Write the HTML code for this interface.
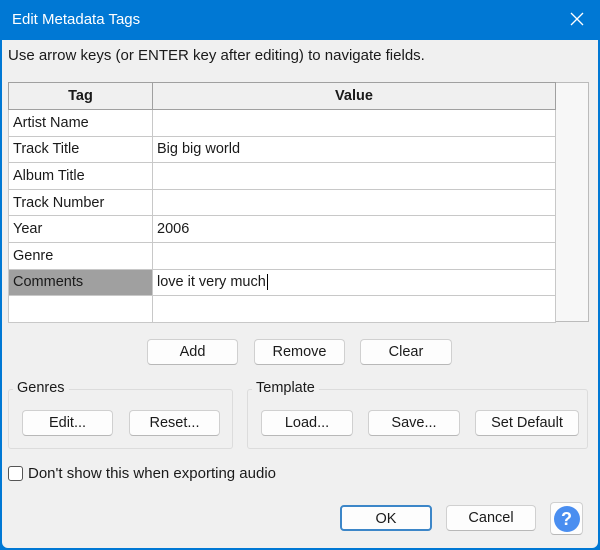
<!DOCTYPE html>
<html><head><meta charset="utf-8"><style>
*{box-sizing:border-box;margin:0;padding:0}
body{width:600px;height:550px;overflow:hidden;background:#0078d4;font-family:"Liberation Sans",sans-serif;font-size:14.5px;color:#1a1a1a;position:relative}
.win{position:absolute;left:2px;top:40px;width:596px;height:508px;background:#f0f0f0;border-radius:0 0 6px 6px}
.a{position:absolute}
.title{left:12px;top:11px;color:#fff;font-size:15px}
.btn{position:absolute;background:#fdfdfd;border:1px solid #d0d0d0;border-bottom-color:#b8b8b8;border-radius:4px;text-align:center;line-height:24px;height:26px}
.grp{position:absolute;border:1px solid #dcdcdc;border-radius:3px}
.gl{position:absolute;background:#f0f0f0;padding:0 4px}
table{border-collapse:collapse;position:absolute;left:8px;top:82px;background:#fff}
td{border:1px solid #c8c8c8;height:26.6px;padding:0 4px;white-space:nowrap}
th{border:1px solid #a0a0a0;background:#f0f0f0;height:27px;font-weight:bold}
</style></head><body>
<div class="a title">Edit Metadata Tags</div>
<svg class="a" style="left:570px;top:12px" width="14" height="14"><path d="M1 1L13 13M13 1L1 13" stroke="#fff" stroke-width="1.3"/></svg>
<div class="win"></div>
<div class="a" style="left:8px;top:47px;font-size:15px">Use arrow keys (or ENTER key after editing) to navigate fields.</div>
<div class="a" style="left:8px;top:82px;width:581px;height:240px;background:#f7f7f7;border:1px solid #bbb"></div>
<table>
<tr><th style="width:144px">Tag</th><th style="width:403px">Value</th></tr>
<tr><td>Artist Name</td><td></td></tr>
<tr><td>Track Title</td><td>Big big world</td></tr>
<tr><td>Album Title</td><td></td></tr>
<tr><td>Track Number</td><td></td></tr>
<tr><td>Year</td><td>2006</td></tr>
<tr><td>Genre</td><td></td></tr>
<tr><td style="background:#a0a0a0">Comments</td><td>love it very much<span style="border-left:1px solid #000;margin-left:1px"></span></td></tr>
<tr><td></td><td></td></tr>
</table>
<div class="btn" style="left:147px;top:339px;width:91px">Add</div>
<div class="btn" style="left:254px;top:339px;width:91px">Remove</div>
<div class="btn" style="left:360px;top:339px;width:92px">Clear</div>
<div class="grp" style="left:8px;top:389px;width:225px;height:60px"></div>
<div class="gl" style="left:13px;top:380px">Genres</div>
<div class="grp" style="left:247px;top:389px;width:341px;height:60px"></div>
<div class="gl" style="left:252px;top:380px">Template</div>
<div class="btn" style="left:22px;top:410px;width:91px">Edit...</div>
<div class="btn" style="left:129px;top:410px;width:91px">Reset...</div>
<div class="btn" style="left:261px;top:410px;width:92px">Load...</div>
<div class="btn" style="left:368px;top:410px;width:92px">Save...</div>
<div class="btn" style="left:475px;top:410px;width:104px">Set Default</div>
<div class="a" style="left:8px;top:466px;width:15px;height:15px;border:1px solid #555;border-radius:3px;background:#fff"></div>
<div class="a" style="left:28px;top:465px;font-size:15px">Don't show this when exporting audio</div>
<div class="btn" style="left:340px;top:505px;width:92px;border:2px solid #3c86c8">OK</div>
<div class="btn" style="left:446px;top:505px;width:90px">Cancel</div>
<div class="btn" style="left:550px;top:502px;width:33px;height:33px;padding-top:3px"><div style="width:26px;height:26px;margin:0 auto;border-radius:50%;background:#4a8ef0;color:#fff;font-weight:bold;font-size:18px;line-height:26px">?</div></div>
</body></html>
